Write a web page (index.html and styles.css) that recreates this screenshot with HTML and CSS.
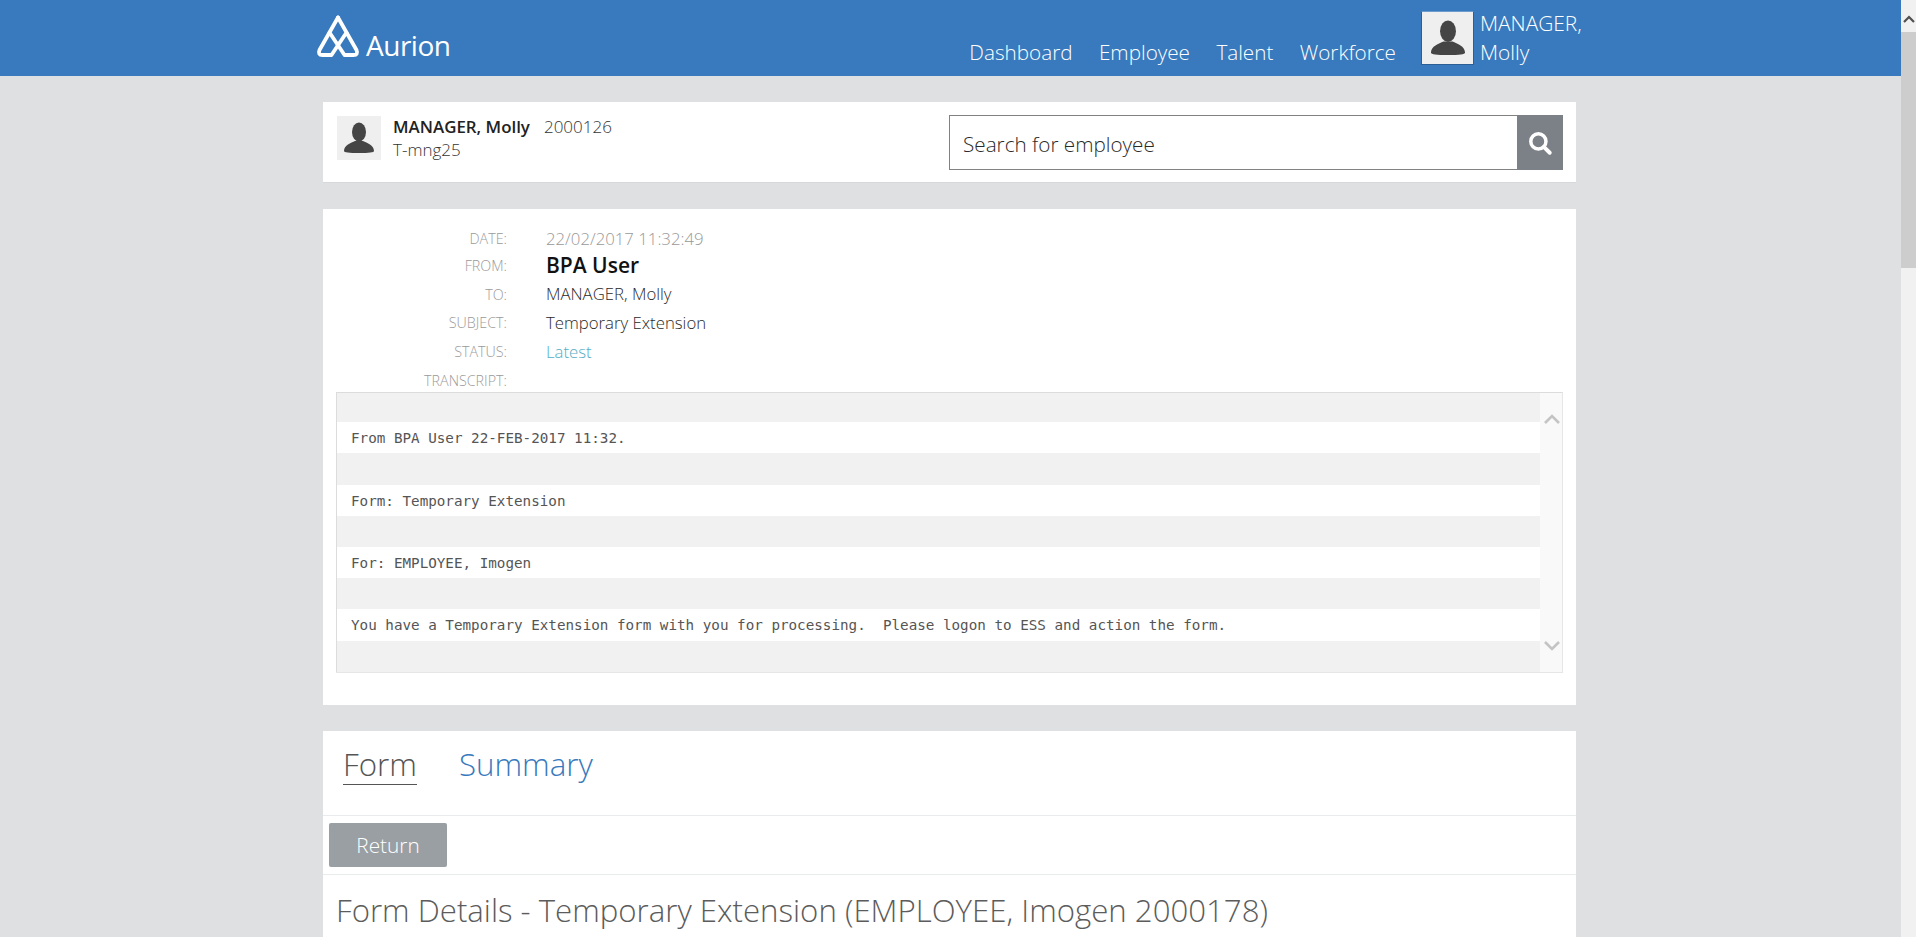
FILE: index.html
```html
<!DOCTYPE html>
<html lang="en">
<head>
  <meta charset="UTF-8">
  <title>Aurion</title>
  <link rel="stylesheet" href="styles.css">
</head>
<body>
  <div class="page">
    <header class="topbar">
      <div class="topbar-inner">
        <a class="logo">
          <svg class="logo-mark" viewBox="0 0 44 44" width="44" height="44" fill="none" stroke="#fff" stroke-width="3.800" stroke-linejoin="round" stroke-linecap="round">
            <path d="M22 3.500 L40.500 36 Q42.500 41 37.500 41 L28.500 41 L13.500 18.500"/>
            <path d="M22 3.500 L3.500 36 Q1.500 41 6.500 41 L15.500 41 L30.500 18.500"/>
          </svg>
          <span class="logo-text">Aurion</span>
        </a>
        <nav class="mainnav">
          <a>Dashboard</a>
          <a>Employee</a>
          <a>Talent</a>
          <a>Workforce</a>
        </nav>
        <div class="usermenu">
          <div class="avatar avatar-lg">
            <svg viewBox="0 0 44 44" width="50" height="50"><use href="#person"/></svg>
          </div>
          <div class="usermenu-name">MANAGER,<br>Molly</div>
        </div>
      </div>
    </header>

    <main class="content">
      <section class="card empbar">
        <div class="avatar">
          <svg viewBox="0 0 44 44" width="44" height="44"><use href="#person"/></svg>
        </div>
        <div class="empbar-info">
          <div><b>MANAGER, Molly</b><span class="empbar-id">2000126</span></div>
          <div>T-mng25</div>
        </div>
        <div class="search">
          <input class="search-input" type="text" placeholder="Search for employee">
          <button class="search-btn">
            <svg viewBox="0 0 24 24" width="26" height="26" fill="none" stroke="#fff"><circle cx="10.500" cy="10.500" r="7" stroke-width="3.200"/><path d="M15.500 15.500 L21 21" stroke-width="3.600" stroke-linecap="round"/></svg>
          </button>
        </div>
      </section>

      <section class="card message">
        <dl class="meta">
          <dt>DATE:</dt><dd class="meta-date">22/02/2017 11:32:49</dd>
          <dt>FROM:</dt><dd class="meta-from">BPA User</dd>
          <dt>TO:</dt><dd>MANAGER, Molly</dd>
          <dt>SUBJECT:</dt><dd>Temporary Extension</dd>
          <dt>STATUS:</dt><dd class="meta-status">Latest</dd>
          <dt>TRANSCRIPT:</dt><dd></dd>
        </dl>
        <div class="transcript">
          <div class="transcript-rows">
            <div class="row"></div>
            <div class="row">From BPA User 22-FEB-2017 11:32.</div>
            <div class="row"></div>
            <div class="row">Form: Temporary Extension</div>
            <div class="row"></div>
            <div class="row">For: EMPLOYEE, Imogen</div>
            <div class="row"></div>
            <div class="row">You have a Temporary Extension form with you for processing.  Please logon to ESS and action the form.</div>
            <div class="row"></div>
          </div>
          <div class="transcript-scroll">
            <svg viewBox="0 0 16 10" width="16" height="10" fill="none" stroke="#c4c4c4" stroke-width="2.600"><path d="M1 9 L8 2 L15 9"/></svg>
            <svg viewBox="0 0 16 10" width="16" height="10" fill="none" stroke="#c4c4c4" stroke-width="2.600"><path d="M1 1 L8 8 L15 1"/></svg>
          </div>
        </div>
      </section>

      <section class="card formcard">
        <div class="tabs">
          <a class="tab tab-active">Form</a>
          <a class="tab">Summary</a>
        </div>
        <div class="actions">
          <button class="btn">Return</button>
        </div>
        <h2 class="formtitle">Form Details - Temporary Extension (EMPLOYEE, Imogen 2000178)</h2>
      </section>
    </main>
  </div>

  <aside class="scrollbar">
    <div class="scrollbar-arrow">
      <svg viewBox="0 0 12 8" width="12" height="8" fill="none" stroke="#505050" stroke-width="2.200"><path d="M1 7 L6 2 L11 7"/></svg>
    </div>
    <div class="scrollbar-thumb"></div>
  </aside>

  <svg width="0" height="0" class="defs">
    <symbol id="person" viewBox="0 0 44 44">
      <ellipse cx="22" cy="16" rx="7" ry="9.500" fill="#454545"/>
      <path d="M7 35 C7 29 14 27 18 25 L26 25 C30 27 37 29 37 35 Q37 37 22 37 Q7 37 7 35 Z" fill="#454545"/>
    </symbol>
  </svg>
</body>
</html>
```

FILE: styles.css
```css
html, body {
  margin: 0;
  height: 100%;
  overflow: hidden;
}
body {
  display: flex;
  font-family: "Open Sans", Arial, sans-serif;
  font-weight: 300;
  color: #3c3c3c;
  background-color: #dfe0e2;
}
.defs {
  display: block;
  width: 0;
  height: 0;
}
.page {
  flex: 1;
  min-width: 0;
  overflow: hidden;
}

/* top bar */
.topbar {
  height: 76px;
  background-color: #387abd;
  color: #fff;
}
.topbar-inner {
  width: 1266px;
  height: 76px;
  margin-left: 316px;
  display: flex;
  align-items: stretch;
  box-sizing: border-box;
}
.logo {
  display: flex;
  align-items: flex-end;
  padding-bottom: 16px;
}
.logo-mark {
  display: block;
  margin-bottom: 2px;
}
.logo-text {
  font-size: 28px;
  font-weight: 400;
  line-height: 32px;
  margin-left: 6px;
  margin-bottom: -1px;
  letter-spacing: -0.5px;
}
.mainnav {
  display: flex;
  gap: 26.400px;
  margin-left: auto;
  align-items: flex-end;
  padding-bottom: 9px;
  font-size: 20.700px;
  line-height: 30px;
}
.usermenu {
  display: flex;
  margin-left: 25px;
  padding-top: 11px;
  width: 161px;
  box-sizing: border-box;
}
.usermenu-name {
  font-size: 20.900px;
  line-height: 29px;
  margin-left: 6px;
  margin-top: -2px;
}
.avatar {
  width: 44px;
  height: 44px;
  flex: none;
  background-color: #efefef;
}
.avatar svg {
  display: block;
}
.avatar-lg {
  width: 53px;
  height: 54px;
  box-sizing: border-box;
  display: flex;
  align-items: center;
  justify-content: center;
  border: 1px solid #2c5f93;
  border-top-color: #6b9ccd;
}

.content {
  width: 1253px;
  margin-left: 323px;
  padding-top: 26px;
}
.card {
  background-color: #fff;
  margin-bottom: 26px;
}

/* employee bar */
.empbar {
  height: 81px;
  box-sizing: border-box;
  padding: 14px 13px 14px 14px;
  display: flex;
  border-bottom: 1px solid #d6d8da;
}
.empbar-info {
  margin-left: 12px;
  margin-top: -1px;
  font-size: 17px;
  line-height: 23px;
  font-weight: 300;
  color: #333;
}
.empbar-info b {
  font-weight: 600;
  font-size: 16.900px;
  color: #222;
}
.empbar-id {
  margin-left: 14px;
}
.search {
  margin-left: auto;
  margin-top: -1px;
  display: flex;
  width: 614px;
  height: 55px;
}
.search-input {
  flex: 1;
  min-width: 0;
  box-sizing: border-box;
  border: 1px solid #828282;
  border-right: none;
  padding: 2px 13px 0;
  font-family: inherit;
  font-size: 20.700px;
  font-weight: 300;
  color: #333;
  outline: none;
}
.search-input::placeholder {
  color: #2a2a2a;
  opacity: 1;
}
.search-btn {
  width: 46px;
  border: none;
  padding: 0;
  background-color: #7b8187;
  display: flex;
  align-items: center;
  justify-content: center;
}

/* message */
.message {
  height: 496px;
  box-sizing: border-box;
  padding: 16px 13px 0;
}
.meta {
  display: grid;
  grid-template-columns: 171px 1fr;
  grid-template-rows: 26px;
  column-gap: 39px;
  margin: 0 0 -4px;
  grid-auto-rows: 28.600px;
  align-items: center;
  height: 171px;
}
.meta dt {
  text-align: right;
  font-size: 14.300px;
  padding-top: 1px;
  color: #9a9a9a;
}
.meta dd {
  margin: 0;
  font-size: 16.750px;
  color: #2a2a2a;
}
.meta .meta-date {
  color: #999;
}
.meta .meta-from {
  font-size: 21px;
  font-weight: 600;
  color: #111;
}
.meta .meta-status {
  color: #55aec6;
}
.transcript {
  display: flex;
  height: 281px;
  border: 1px solid #e6e6e6;
  border-left: none;
  border-top-color: #dcdcdc;
  box-sizing: border-box;
}
.transcript-rows {
  flex: 1;
  min-width: 0;
  overflow: hidden;
  border-left: 1px solid #dcdcdc;
}
.row {
  height: 31.200px;
  line-height: 33px;
  padding-left: 14px;
  font-family: "DejaVu Sans Mono", "Liberation Mono", monospace;
  font-size: 14.260px;
  font-weight: 400;
  color: #555;
  white-space: pre;
}
.row:first-child {
  height: 29.200px;
}
.row:nth-child(odd) {
  background-color: #f1f1f1;
}
.transcript-scroll {
  width: 22px;
  background-color: #f9f9f9;
  display: flex;
  flex-direction: column;
  justify-content: space-between;
  align-items: center;
  padding: 21px 0 21px 1px;
  box-sizing: border-box;
}
.transcript-scroll svg {
  display: block;
}

/* form area */
.formcard {
  margin-bottom: 0;
  height: 300px;
}
.tabs {
  height: 85px;
  box-sizing: border-box;
  padding: 13px 20px 0;
  display: flex;
  gap: 42px;
  align-items: flex-start;
  border-bottom: 1px solid #e8eced;
}
.tab {
  font-size: 31.300px;
  line-height: 40px;
  color: #387abd;
}
.tab-active {
  color: #555;
  border-bottom: 1px solid #555;
}
.actions {
  height: 59px;
  box-sizing: border-box;
  padding: 7px 6px 0;
  border-bottom: 1px solid #e8eced;
}
.btn {
  display: block;
  width: 118px;
  height: 44px;
  border: none;
  border-radius: 2px;
  background-color: #9a9fa3;
  color: #fff;
  font-family: inherit;
  font-weight: 300;
  font-size: 20.800px;
}
.formtitle {
  margin: 0;
  padding: 15px 13px 0;
  font-size: 31.200px;
  line-height: 41px;
  font-weight: 300;
  color: #5c5c5c;
}

/* window scrollbar */
.scrollbar {
  width: 15px;
  flex: none;
  background-color: #f1f1f1;
  display: flex;
  flex-direction: column;
}
.scrollbar-arrow {
  height: 32px;
  box-sizing: border-box;
  padding-top: 15px;
  display: flex;
  justify-content: center;
}
.scrollbar-arrow svg {
  display: block;
}
.scrollbar-thumb {
  height: 236px;
  background-color: #cdcdcd;
}
```
